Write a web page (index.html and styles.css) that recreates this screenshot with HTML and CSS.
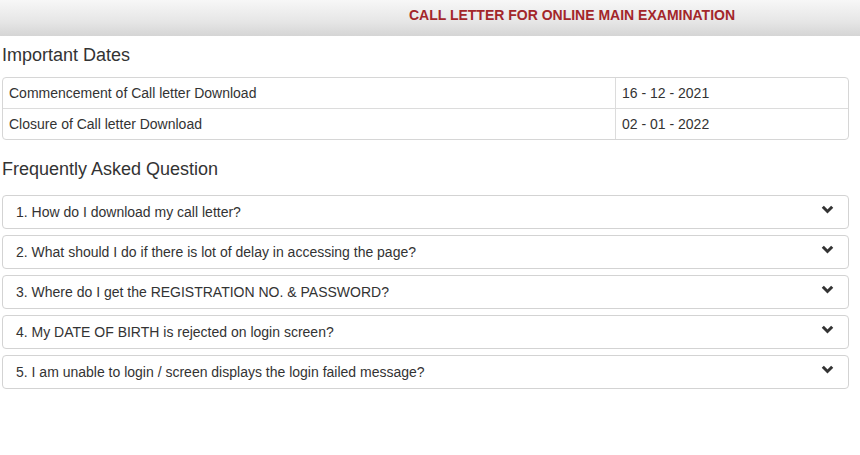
FILE: index.html
```html
<!DOCTYPE html>
<html>
<head>
<meta charset="utf-8">
<link rel="stylesheet" href="styles.css">
</head>
<body>
<header class="topbar">
  <div class="title">CALL LETTER FOR ONLINE MAIN EXAMINATION</div>
</header>
<main class="content">
  <h3 class="section-title">Important Dates</h3>
  <div class="dates">
    <div class="row">
      <div class="cell label">Commencement of Call letter Download</div>
      <div class="cell value">16 - 12 - 2021</div>
    </div>
    <div class="row">
      <div class="cell label">Closure of Call letter Download</div>
      <div class="cell value">02 - 01 - 2022</div>
    </div>
  </div>
  <h3 class="section-title faq-title">Frequently Asked Question</h3>
  <div class="faq">
    <div class="panel"><span>1. How do I download my call letter?</span><svg class="chev" width="13" height="9" viewBox="0 0 13 9"><polyline points="1.8,1.8 6.5,6.5 11.2,1.8" fill="none" stroke="#333" stroke-width="3"/></svg></div>
    <div class="panel"><span>2. What should I do if there is lot of delay in accessing the page?</span><svg class="chev" width="13" height="9" viewBox="0 0 13 9"><polyline points="1.8,1.8 6.5,6.5 11.2,1.8" fill="none" stroke="#333" stroke-width="3"/></svg></div>
    <div class="panel"><span>3. Where do I get the REGISTRATION NO. &amp; PASSWORD?</span><svg class="chev" width="13" height="9" viewBox="0 0 13 9"><polyline points="1.8,1.8 6.5,6.5 11.2,1.8" fill="none" stroke="#333" stroke-width="3"/></svg></div>
    <div class="panel"><span>4. My DATE OF BIRTH is rejected on login screen?</span><svg class="chev" width="13" height="9" viewBox="0 0 13 9"><polyline points="1.8,1.8 6.5,6.5 11.2,1.8" fill="none" stroke="#333" stroke-width="3"/></svg></div>
    <div class="panel"><span>5. I am unable to login / screen displays the login failed message?</span><svg class="chev" width="13" height="9" viewBox="0 0 13 9"><polyline points="1.8,1.8 6.5,6.5 11.2,1.8" fill="none" stroke="#333" stroke-width="3"/></svg></div>
  </div>
</main>
</body>
</html>
```
FILE: styles.css
```css
html, body {
  margin: 0;
  padding: 0;
  background: #fff;
  font-family: "Liberation Sans", Arial, sans-serif;
  color: #333;
  font-size: 14px;
}
.topbar {
  height: 36px;
  background: linear-gradient(to bottom, #f7f7f7 0%, #e6e6e6 60%, #d5d5d5 100%);
  display: flex;
  align-items: center;
  justify-content: center;
  padding-left: 284px;
  padding-bottom: 7px;
  box-sizing: border-box;
}
.title {
  color: #a3262a;
  font-weight: bold;
  font-size: 14px;
  line-height: 16px;
}
.content {
  padding: 0 11px 0 2px;
}
.section-title {
  margin: 9px 0 0 0;
  font-size: 18px;
  font-weight: normal;
  line-height: 20px;
  color: #333;
}
.dates {
  margin-top: 12px;
  border: 1px solid #d6d6d6;
  border-radius: 4px;
}
.row {
  display: flex;
}
.row + .row {
  border-top: 1px solid #dcdcdc;
}
.cell {
  padding: 5px 6px;
  line-height: 20px;
}
.label {
  width: 600px;
  border-right: 1px solid #dcdcdc;
}
.value {
  flex: 1;
}
.faq-title {
  margin-top: 19px;
}
.faq {
  margin-top: 16px;
  display: flex;
  flex-direction: column;
  gap: 6px;
}
.panel {
  border: 1px solid #d3d3d3;
  border-radius: 4px;
  padding: 6px 14px 6px 13px;
  line-height: 20px;
  display: flex;
  justify-content: space-between;
  align-items: center;
}
.chev {
  margin-top: -6px;
}
```
